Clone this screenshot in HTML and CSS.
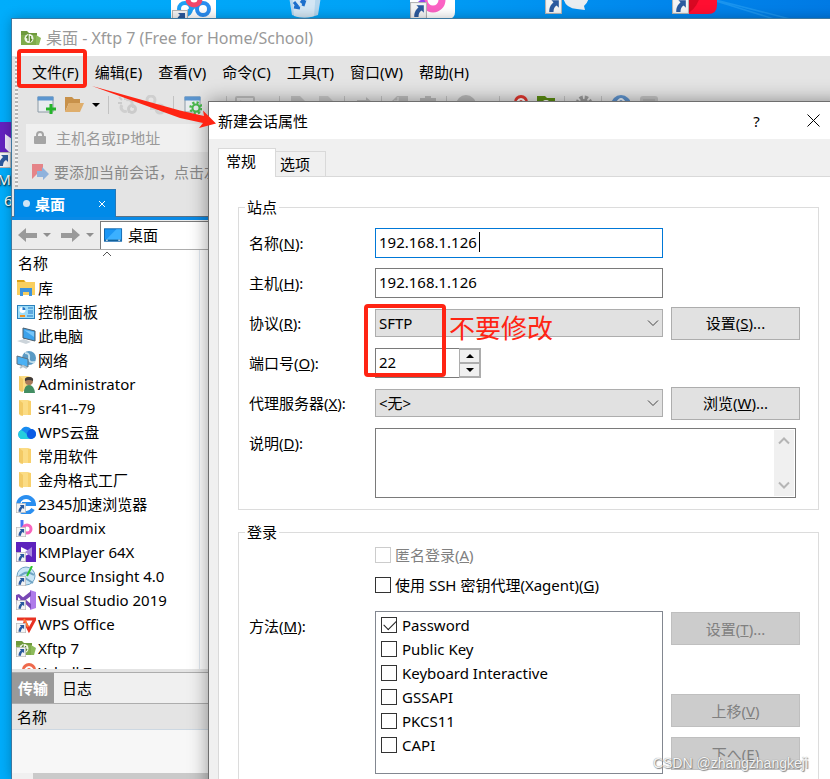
FILE: index.html
```html
<!DOCTYPE html>
<html lang="zh-CN">
<head>
    <meta charset="UTF-8">
    <meta name="viewport" content="width=device-width, initial-scale=1.0">
    <title>Xftp 7</title>
    <link rel="stylesheet" href="styles.css">
</head>
<body>
    <!-- shared icons -->
    <svg class="defs" width="0" height="0" aria-hidden="true">
        <symbol id="shortcut" viewBox="0 0 16 16">
            <rect x=".5" y=".5" width="15" height="15" fill="#f4f4f4" stroke="#b4b4b4"/>
            <path d="M6 3h7v7l-2-2c-2 1-3 3-3 6H4c0-4 1-6 4-9z" fill="#2b5a9e"/>
        </symbol>
        <symbol id="folder" viewBox="0 0 20 20">
            <path d="M3 2h9l3 1v14H7l-2 1-2-2z" fill="#fbdc85"/>
            <path d="M3 2l4 3v13l-4-2z" fill="#f3ca65"/>
            <path d="M12 3h3v14h-3z" fill="#f8d06b"/>
        </symbol>
        <symbol id="chev" viewBox="0 0 12 8">
            <path d="M1 1.500l5 5 5-5" fill="none" stroke="currentColor"/>
        </symbol>
        <symbol id="drop" viewBox="0 0 8 6">
            <path d="M0 1h8L4 5z" fill="currentColor"/>
        </symbol>
        <symbol id="xftp" viewBox="0 0 20 16">
            <path d="M0 1h6l2 2h8v12H0z" fill="#6f9a3e"/>
            <path d="M0 5h16v10H0z" fill="#7fab4b"/>
            <path d="M15 5l5 3-2 7h-3z" fill="#8dbb5b"/>
            <circle cx="8" cy="8.500" r="4.500" fill="#f2f6ea"/>
            <path d="M7 11V6L5.500 8M9.500 6v5L11 9" fill="none" stroke="#5c8a2f" stroke-width="1.300"/>
        </symbol>
        <symbol id="monitor" viewBox="0 0 20 16">
            <rect x=".5" y="1.500" width="18" height="13" fill="#1b96f5" stroke="#0d62a8"/>
            <path d="M1 14L13 2h5v12z" fill="#3bb0ff"/>
            <path d="M1 13.500h17" stroke="#05406f"/>
            <path d="M2 13.500h2M15 13.500h2" stroke="#fff"/>
        </symbol>
    </svg>

    <div class="desktop">
        <svg class="wallpaper" viewBox="0 0 830 24" aria-hidden="true">
            <path d="M716 1l58 18M700-4l90 23" stroke="#2aa0f2" stroke-width="1.500" opacity=".6"/>
            <rect x="171" y="-20" width="45" height="39" fill="#fff"/>
            <circle cx="185" cy="9" r="6" fill="none" stroke="#1ea0f5" stroke-width="4"/>
            <circle cx="203" cy="9" r="6" fill="none" stroke="#2a8df0" stroke-width="4"/>
            <path d="M188 12l11-10" stroke="#1ea0f5" stroke-width="4"/>
            <circle cx="194" cy="-1" r="6" fill="#fff" stroke="#f2456a" stroke-width="5"/>
            <use href="#shortcut" x="172" y="10" width="16" height="16"/>
            <path d="M288-10h34l-4 25q-13 5-26 0z" fill="#b4d6ee"/>
            <path d="M292-10l2 26q10 3 20 0l2-26z" fill="#d3e6f4"/>
            <path d="M294 2l4 5M304-1l-3 4M300 8l-6-1M303 6l2-6" stroke="#1d6fcc" stroke-width="3"/>
            <path d="M410-20h45v32q0 6-6 7h-39z" fill="#fff"/>
            <circle cx="433" cy="0" r="9" fill="none" stroke="#fb62c4" stroke-width="7"/>
            <path d="M421 0q3 6 5 7" stroke="#8f45ee" stroke-width="6"/>
            <use href="#shortcut" x="410" y="2" width="17" height="17"/>
            <use href="#shortcut" x="545" y="-3" width="17" height="17"/>
            <path d="M563-6q0 14 14 15l8 1-1-4q5-4 5-12z" fill="#e9edf0"/>
            <path d="M680-20h37v25q0 9-9 9h-28z" fill="#ff0f31"/>
            <path d="M680-20h22q0 27-16 34h-6z" fill="#d80822"/>
            <use href="#shortcut" x="672" y="-3" width="17" height="17"/>
        </svg>
        <div class="desktop-icon">
            <svg width="12" height="46" viewBox="0 0 12 46" aria-hidden="true">
                <path d="M0 0h12v46H0z" fill="#6322bf"/>
                <path d="M5 12l7 5v16L5 26z" fill="#efe7fa"/>
                <use href="#shortcut" x="-5" y="30" width="16" height="16"/>
            </svg>
            <span>KMPlayer</span>
            <span class="indent">64X</span>
        </div>

        <main class="window">
            <header class="window-title">
                <svg width="20" height="16"><use href="#xftp"/></svg>
                <h1>桌面 - Xftp 7 (Free for Home/School)</h1>
            </header>

            <div class="rebar">
                <nav class="menu">
                    <button>文件(F)</button>
                    <button>编辑(E)</button>
                    <button>查看(V)</button>
                    <button>命令(C)</button>
                    <button>工具(T)</button>
                    <button>窗口(W)</button>
                    <button>帮助(H)</button>
                </nav>
                <div class="toolbar">
                    <button aria-label="新建"><svg viewBox="0 0 20 20"><path d="M2 2h15v15H2z" fill="#e9edf0" stroke="#8c9aa5"/><path d="M1.500 1.500h16v4h-16z" fill="#5b95cf"/><path d="M15 9v10M10 14h10" stroke="#26b32b" stroke-width="3"/></svg></button>
                    <button aria-label="打开"><svg viewBox="0 0 20 20"><path d="M1 2h7l2 2h6v4H5L1 17z" fill="#c8914a"/><path d="M5 8h15l-4 9H1z" fill="#dfae6c"/></svg></button>
                    <svg class="drop"><use href="#drop"/></svg>
                    <span class="sep"></span>
                    <button aria-label="断开" disabled><svg viewBox="0 0 20 20"><path d="M2 2l3 3M8 1v4M1 8h4M12 18v-3M18 12h-3" stroke="#cbcbcb" stroke-width="2"/><path d="M9 5a4 4 0 0 1 6 4M5 10a4 4 0 0 0 5 6" fill="none" stroke="#cfcfcf" stroke-width="3"/><circle cx="15" cy="14" r="3.500" fill="none" stroke="#cbcbcb" stroke-width="3"/></svg></button>
                    <button aria-label="重新连接" disabled><svg viewBox="0 0 20 20"><circle cx="6" cy="5" r="4" fill="none" stroke="#cfcfcf" stroke-width="3"/><circle cx="15" cy="14" r="4" fill="none" stroke="#cfcfcf" stroke-width="3"/><path d="M6 9v5h6" fill="none" stroke="#cfcfcf" stroke-width="2"/></svg></button>
                    <span class="sep"></span>
                    <button aria-label="属性"><svg viewBox="0 0 20 20"><path d="M3 2h15v15H3z" fill="#e9edf0" stroke="#8c9aa5"/><path d="M2.500 1.500h16v4h-16z" fill="#5b95cf"/><circle cx="14" cy="13" r="5.500" fill="none" stroke="#49b84c" stroke-width="2.500" stroke-dasharray="2.200 2.100"/><circle cx="14" cy="13" r="3.500" fill="#e9edf0" stroke="#49b84c" stroke-width="2"/></svg></button>
                    <svg class="drop"><use href="#drop"/></svg>
                    <span class="sep"></span>
                    <button aria-label="终端" disabled><svg viewBox="0 0 20 20"><rect x="1" y="2" width="18" height="14" rx="1" fill="none" stroke="#bdbdbd" stroke-width="2"/><path d="M5 6l3 3" stroke="#bdbdbd" stroke-width="2"/></svg></button>
                    <svg class="drop"><use href="#drop"/></svg>
                    <span class="sep"></span>
                    <button aria-label="新建文件" disabled><svg viewBox="0 0 20 20"><path d="M3 1h9l5 5v12H3z" fill="#c3c3c3"/></svg></button>
                    <button aria-label="编辑文件" disabled><svg viewBox="0 0 20 20"><path d="M3 1h9l5 5v12H3z" fill="#c9c9c9"/></svg></button>
                    <span class="sep"></span>
                    <button aria-label="传输" disabled><svg viewBox="0 0 20 20"><path d="M4 5h9V2l7 6-7 6v-4H4z" fill="#bcbcbc"/></svg></button>
                    <span class="sep"></span>
                    <button aria-label="复制" disabled><svg viewBox="0 0 20 20"><path d="M7 1h11v12H2V6z" fill="#bdbdbd"/><path d="M4 6h4V2" fill="none" stroke="#e3e3e3"/></svg></button>
                    <button aria-label="粘贴" disabled><svg viewBox="0 0 20 20"><path d="M2 3h5V1h6v2h5v14H2z" fill="#b8b8b8"/></svg></button>
                    <span class="sep"></span>
                    <button aria-label="同步" disabled><svg viewBox="0 0 20 20"><circle cx="11" cy="10" r="10" fill="#b8b8b8"/></svg></button>
                    <svg class="drop"><use href="#drop"/></svg>
                    <span class="sep"></span>
                    <button aria-label="Xshell"><svg viewBox="0 0 20 20"><circle cx="13" cy="7" r="7" fill="#df362e"/><path d="M0 7h7" stroke="#df362e" stroke-width="2"/><path d="M9 7q4-6 8 0" fill="none" stroke="#fff" stroke-width="2"/></svg></button>
                    <button aria-label="Xftp"><svg viewBox="0 0 20 20"><path d="M1 1h8l2 2h8v14H1z" fill="#5a8c12"/><circle cx="10" cy="10" r="5" fill="#fff"/></svg></button>
                    <span class="sep"></span>
                    <button aria-label="选项"><svg viewBox="0 0 20 20"><circle cx="11" cy="9" r="6" fill="none" stroke="#9b9b9b" stroke-width="5" stroke-dasharray="3 1.700"/><circle cx="11" cy="9" r="5" fill="#9b9b9b"/></svg></button>
                    <span class="sep"></span>
                    <button aria-label="帮助"><svg viewBox="0 0 20 20"><circle cx="11" cy="10" r="10" fill="#5f93cd"/><path d="M7 8q4-8 8 0" fill="none" stroke="#eef4fb" stroke-width="2"/></svg></button>
                    <button aria-label="反馈"><svg viewBox="0 0 20 20"><rect x="2" y="1" width="18" height="14" rx="3" fill="#c4c4c4"/><path d="M5 5h12" stroke="#aaa"/></svg></button>
                </div>
                <label class="address">
                    <svg width="14" height="14" viewBox="0 0 14 14"><path d="M4 6V4a3 3 0 0 1 6 0v2" fill="none" stroke="#a5a5a5" stroke-width="2"/><rect x="1" y="5" width="12" height="8" rx="1" fill="#a5a5a5"/></svg>
                    <input type="text" placeholder="主机名或IP地址" aria-label="主机名或IP地址">
                </label>
                <div class="hint">
                    <svg width="17" height="17" viewBox="0 0 17 17"><path d="M0 1h11v9L5 11l-5 5z" fill="#e58488"/><path d="M10 4l7 7-6 6v-3H5V8h5z" fill="#8fb2dc"/></svg>
                    <span>要添加当前会话，点击左</span>
                </div>
            </div>

            <div class="tabstrip">
                <div class="session-tab">
                    <span class="dot"></span>
                    <strong>桌面</strong>
                    <button aria-label="关闭"><svg width="8" height="8" viewBox="0 0 8 8"><path d="M1 1l6 6M7 1L1 7" stroke="#fff"/></svg></button>
                </div>
            </div>

            <div class="nav">
                <button aria-label="后退"><svg width="20" height="16" viewBox="0 0 20 16"><path d="M0 8l8-7v5h11v5H8v4z" fill="#9a9a9a"/></svg></button>
                <svg class="drop"><use href="#drop"/></svg>
                <button aria-label="前进"><svg width="20" height="16" viewBox="0 0 20 16"><path d="M19 8l-8-7v5H0v5h11v4z" fill="#9a9a9a"/></svg></button>
                <svg class="drop"><use href="#drop"/></svg>
                <div class="path">
                    <svg width="19" height="16"><use href="#monitor"/></svg>
                    <span>桌面</span>
                </div>
            </div>

            <div class="files">
                <div class="files-head">
                    <span>名称</span>
                    <svg class="sort" width="10" height="6" viewBox="0 0 10 6"><path d="M1 5l4-4 4 4" fill="none" stroke="#555"/></svg>
                </div>
                <ul>
                    <li><svg viewBox="0 0 20 20"><path d="M1 2h7l2 2h9v13H1z" fill="#f9cf5f"/><path d="M1 2h7l1 2H1z" fill="#dda215"/><path d="M4 18v-8h12v8h-3v-4H7v4z" fill="#3d93dd"/></svg>库</li>
                    <li><svg viewBox="0 0 20 20"><rect x="1.500" y="3.500" width="17" height="13" fill="#9bdcf8" stroke="#2b82bd"/><circle cx="6.500" cy="8" r="3" fill="#fff"/><path d="M6.500 8V5a3 3 0 0 1 3 3z" fill="#2476c6"/><path d="M12 6h5M12 9h5M12 11h5" stroke="#2476c6"/><path d="M4 14h5" stroke="#f09121" stroke-width="2"/><path d="M11 14h6" stroke="#2476c6"/></svg>控制面板</li>
                    <li><svg viewBox="0 0 20 20"><path d="M7 2l12 3v10L7 12z" fill="#3ba2ec" stroke="#4b5d6b"/><path d="M8 4l10 7V6z" fill="#77c6fa"/><path d="M1 15l7-2 7 3-5 2z" fill="#ccd4da"/></svg>此电脑</li>
                    <li><svg viewBox="0 0 20 20"><circle cx="13" cy="8" r="7" fill="#5b9bc5"/><path d="M9 3q5 0 4 5t6 4" fill="none" stroke="#c5e1ee" stroke-width="2"/><path d="M1 6l11 3v8L1 14z" fill="#4bb1f4" stroke="#5e7281"/><path d="M4 18l3-2 4 2" fill="none" stroke="#b8c4cb" stroke-width="2"/></svg>网络</li>
                    <li><svg viewBox="0 0 20 20"><use href="#folder"/><path d="M8 19q0-8 5-8t6 8z" fill="#438e63"/><circle cx="13" cy="7" r="4" fill="#a7795a"/><path d="M9 7q-1-4 4-4t4 4q-4-2-8 0z" fill="#3f3b38"/></svg>Administrator</li>
                    <li><svg viewBox="0 0 20 20"><use href="#folder"/></svg>sr41--79</li>
                    <li><svg viewBox="0 0 20 20"><path d="M5 17a5 5 0 0 1 0-9 6 6 0 0 1 10-1 5 5 0 0 1 0 10z" fill="#188bf0"/><path d="M5 17a5 5 0 0 1 0-9q5 2 9 9z" fill="#24cfdd"/><path d="M15 7a5 5 0 0 1 0 10q-5-1-4-6 1-3 4-4z" fill="#0c5ce5"/></svg>WPS云盘</li>
                    <li><svg viewBox="0 0 20 20"><use href="#folder"/></svg>常用软件</li>
                    <li><svg viewBox="0 0 20 20"><use href="#folder"/></svg>金舟格式工厂</li>
                    <li><svg viewBox="0 0 20 20"><path d="M17 15a8 8 0 1 1 1-5H6" fill="none" stroke="#2b8ff0" stroke-width="4"/><use href="#shortcut" x="0" y="9" width="10" height="10"/></svg>2345加速浏览器</li>
                    <li><svg viewBox="0 0 20 20"><path d="M6 2v10" stroke="#4974f5" stroke-width="3"/><circle cx="11" cy="11" r="4" fill="none" stroke="#f766bd" stroke-width="3"/><use href="#shortcut" x="0" y="9" width="10" height="10"/></svg>boardmix</li>
                    <li><svg viewBox="0 0 20 20"><path d="M0 0h20v20H0z" fill="#5d22bd"/><path d="M5 5l8 4v3l-8 4z" fill="#fff"/><path d="M16 5v10l-7-5z" fill="#a98ae0"/><use href="#shortcut" x="0" y="10" width="10" height="10"/></svg>KMPlayer 64X</li>
                    <li><svg viewBox="0 0 20 20"><circle cx="10" cy="10" r="9" fill="#c8e5f6" stroke="#6fa4c4"/><path d="M2 12q8-9 16-3M9 12l8 5" fill="none" stroke="#6fa4c4" stroke-width="2"/><path d="M16 0l-5 10" stroke="#2fc42d" stroke-width="2"/><use href="#shortcut" x="0" y="10" width="10" height="10"/></svg>Source Insight 4.0</li>
                    <li><svg viewBox="0 0 20 20"><path d="M14 0l6 2v16l-6 2z" fill="#ae7bea"/><path d="M0 5l3-1 12 10v5L2 7v7H0zM15 1v5L3 15l-3-2z" fill="#7848b5"/><use href="#shortcut" x="0" y="10" width="10" height="10"/></svg>Visual Studio 2019</li>
                    <li><svg viewBox="0 0 20 20"><path d="M1 5h18l-6 11-4-8-2 6" fill="none" stroke="#e83223" stroke-width="3"/><path d="M8 5l4 8" stroke="#ff7a35" stroke-width="2"/><use href="#shortcut" x="0" y="9" width="10" height="10"/></svg>WPS Office</li>
                    <li><svg viewBox="0 0 20 20"><use href="#xftp" x="0" y="2" width="20" height="16"/><use href="#shortcut" x="0" y="9" width="10" height="10"/></svg>Xftp 7</li>
                    <li><svg viewBox="0 0 20 20"><circle cx="13" cy="8" r="7" fill="#ee6a4d"/><path d="M9 8q4-6 8 0" fill="none" stroke="#fff" stroke-width="2"/></svg>Xshell 7</li>
                </ul>
            </div>

            <section class="transfer">
                <div class="transfer-tabs">
                    <button class="active">传输</button>
                    <button>日志</button>
                </div>
                <div class="transfer-head">名称</div>
                <div class="transfer-body"></div>
                <div class="hscroll"></div>
            </section>
        </main>

        <div class="dialog" role="dialog" aria-label="新建会话属性">
            <header class="dialog-title">
                <h2>新建会话属性</h2>
                <button aria-label="帮助">?</button>
                <button aria-label="关闭"><svg width="13" height="13" viewBox="0 0 13 13"><path d="M.5 .5l12 12M12.500 .5l-12 12" stroke="#000"/></svg></button>
            </header>
            <div class="dialog-tabs">
                <button class="active">常规</button>
                <button>选项</button>
            </div>
            <form class="pane">
                <fieldset>
                    <legend>站点</legend>
                    <div class="fields">
                        <label for="name">名称(<u>N</u>):</label>
                        <div class="focus">
                            <input type="text" id="name" value="192.168.1.126">
                            <span class="caret"></span>
                        </div>

                        <label for="host" class="first">主机(<u>H</u>):</label>
                        <input type="text" id="host" value="192.168.1.126">

                        <label for="protocol" class="first">协议(<u>R</u>):</label>
                        <div class="select">
                            <select id="protocol"><option>SFTP</option></select>
                            <svg><use href="#chev"/></svg>
                        </div>
                        <button type="button">设置(<u>S</u>)...</button>

                        <label for="port" class="first">端口号(<u>O</u>):</label>
                        <div class="spin">
                            <input type="number" id="port" value="22">
                            <div class="spin-buttons">
                                <button type="button" aria-label="加"><svg class="up"><use href="#drop"/></svg></button>
                                <button type="button" aria-label="减"><svg><use href="#drop"/></svg></button>
                            </div>
                        </div>

                        <label for="proxy" class="first">代理服务器(<u>X</u>):</label>
                        <div class="select">
                            <select id="proxy"><option>&lt;无&gt;</option></select>
                            <svg><use href="#chev"/></svg>
                        </div>
                        <button type="button">浏览(<u>W</u>)...</button>

                        <label for="desc" class="first top">说明(<u>D</u>):</label>
                        <div class="memo">
                            <textarea id="desc"></textarea>
                            <div class="vscroll">
                                <svg class="up"><use href="#chev"/></svg>
                                <svg><use href="#chev"/></svg>
                            </div>
                        </div>
                    </div>
                </fieldset>

                <fieldset>
                    <legend>登录</legend>
                    <div class="login">
                        <div class="options">
                            <label class="disabled"><input type="checkbox" disabled><span>匿名登录(<u>A</u>)</span></label>
                            <label><input type="checkbox"><span>使用 SSH 密钥代理(Xagent)(<u>G</u>)</span></label>
                        </div>
                        <span class="method" id="method">方法(<u>M</u>):</span>
                        <div class="methods" role="group" aria-labelledby="method">
                            <label><input type="checkbox" checked><span>Password</span></label>
                            <label><input type="checkbox"><span>Public Key</span></label>
                            <label><input type="checkbox"><span>Keyboard Interactive</span></label>
                            <label><input type="checkbox"><span>GSSAPI</span></label>
                            <label><input type="checkbox"><span>PKCS11</span></label>
                            <label><input type="checkbox"><span>CAPI</span></label>
                        </div>
                        <div class="side">
                            <button type="button" disabled>设置(<u>T</u>)...</button>
                            <button type="button" class="move" disabled>上移(<u>V</u>)</button>
                            <button type="button" disabled>下へ(<u>E</u>)</button>
                        </div>
                    </div>
                </fieldset>
            </form>
        </div>

        <!-- annotations over both windows -->
        <div class="mark mark-menu"></div>
        <div class="mark mark-port"></div>
        <svg class="arrow" width="126" height="46" viewBox="0 0 126 46" aria-hidden="true"><path d="M1 0l88 24.500 24 5.500-1-5.500L125 37.500 108 42l4-5-23-5z" fill="#ff2413"/></svg>
        <p class="note">不要修改</p>
        <p class="watermark">CSDN @zhangzhangkeji</p>
    </div>
</body>
</html>
```
FILE: styles.css
```css
* {
    margin: 0;
    padding: 0;
    box-sizing: border-box;
    font-family: "Noto Sans", "Noto Sans CJK SC", sans-serif;
}
body {
    font-size: 15px;
    line-height: 20px;
    color: #000;
    overflow: hidden;
}
button {
    background: none;
    border: none;
    font-size: 15px;
    line-height: 20px;
    color: #000;
}
input, select, textarea {
    font-size: 15px;
    color: #000;
    outline: none;
    border-radius: 0;
}
svg {
    display: block;
    flex: none;
}
.defs {
    position: absolute;
}
.desktop {
    position: relative;
    height: 100vh;
    overflow: hidden;
    background: linear-gradient(90deg, #00adfb 0%, #00a2f6 45%, #0086ec 80%, #007ae4 100%);
}
.wallpaper {
    position: absolute;
    top: 0;
    left: 0;
    width: 830px;
    height: 24px;
}
.desktop-icon {
    position: absolute;
    left: 0;
    top: 122px;
    display: flex;
    flex-direction: column;
    gap: 1px;
    color: #fff;
    text-shadow: 1px 1px 2px #000;
}
.desktop-icon span {
    margin-left: -12px;
}
.desktop-icon .indent {
    margin-left: 4px;
}

/* main window */
.window {
    position: absolute;
    left: 12px;
    top: 19px;
    right: -40px;
    bottom: 0;
    display: flex;
    flex-direction: column;
    background: #fff;
    box-shadow: 0 0 0 1px #3d78a0, 0 0 12px rgba(0, 0, 0, 0.3);
}
.window-title {
    display: flex;
    align-items: center;
    gap: 5px;
    height: 37px;
    padding-left: 9px;
}
.window-title h1 {
    font-size: 16px;
    font-weight: normal;
    color: #999;
}
.rebar {
    position: relative;
    display: flex;
    flex-direction: column;
    padding: 0 0 1px 14px;
    background: #e4e4e4;
}
.rebar::before {
    content: "";
    position: absolute;
    left: 3px;
    top: 1px;
    bottom: 2px;
    width: 3px;
    background: repeating-linear-gradient(#b4b4b4 0 2px, #f4f4f4 2px 4px);
}
.menu {
    display: flex;
    align-items: center;
    gap: 16px;
    height: 32px;
    padding-left: 6px;
    white-space: nowrap;
}
.toolbar {
    display: flex;
    align-items: center;
    gap: 8px;
    height: 33px;
    padding-left: 10px;
}
.toolbar button {
    width: 20px;
    height: 20px;
    flex: none;
}
.toolbar button svg {
    width: 20px;
    height: 20px;
}
.drop {
    width: 8px;
    height: 6px;
}
.sep {
    width: 1px;
    height: 18px;
    flex: none;
    background: #c2c2c2;
}
.address {
    display: flex;
    align-items: center;
    gap: 9px;
    height: 28px;
    margin: 3px 0;
    padding-left: 7px;
    background: #f0f0f0;
}
.address input {
    flex: 1;
    border: none;
    background: none;
}
.address input::placeholder {
    color: #999;
    opacity: 1;
}
.hint {
    display: flex;
    align-items: center;
    gap: 5px;
    height: 33px;
    padding-left: 6px;
    color: #888;
}
.tabstrip {
    height: 31px;
    padding-left: 2px;
    background: linear-gradient(#e4e4e4 27px, #5c7285 27px 28px, #0a8ae6 28px);
}
.session-tab {
    display: flex;
    align-items: center;
    gap: 5px;
    width: 102px;
    height: 28px;
    padding: 0 9px 0 8px;
    background: #008ae8;
    border: 1px solid #2678b8;
    border-bottom: none;
    color: #fff;
}
.session-tab .dot {
    width: 7px;
    height: 7px;
    border-radius: 50%;
    background: #cfe4f5;
}
.session-tab button {
    margin-left: auto;
}
.nav {
    display: flex;
    align-items: center;
    gap: 5px;
    height: 30px;
    padding-left: 6px;
    background: #ececec;
    border-bottom: 1px solid #adadad;
}
.nav > .drop {
    color: #8f8f8f;
    margin-right: 5px;
}
.nav > .path {
    margin-left: -4px;
}
.path {
    flex: 1;
    display: flex;
    align-items: center;
    gap: 5px;
    height: 28px;
    padding-left: 3px;
    background: #fff;
    border: 1px solid #7a7a7a;
    border-bottom: none;
}
.files {
    flex: 1;
    min-height: 0;
    width: 188px;
    overflow: hidden;
    border-right: 1px solid #e2eaf2;
}
.files-head {
    position: relative;
    height: 26px;
    padding: 3px 6px;
}
.sort {
    position: absolute;
    left: 90px;
    top: 1px;
}
.files ul {
    list-style: none;
}
.files li {
    display: flex;
    align-items: center;
    gap: 2px;
    height: 24px;
    padding-left: 4px;
    white-space: nowrap;
}
.files li svg {
    width: 20px;
    height: 20px;
}
.transfer {
    border-top: 3px solid #e4e4e4;
    background: #f7f7f7;
}
.transfer-tabs {
    display: flex;
    height: 32px;
    background: #f0f0f0;
    border-top: 1px solid #adadad;
    border-bottom: 1px solid #adadad;
}
.transfer-tabs button {
    padding: 0 8px;
}
.transfer-tabs .active {
    width: 42px;
    padding: 0;
    background: #999;
    color: #fff;
    font-weight: bold;
}
.transfer-head {
    height: 26px;
    padding: 3px 5px;
    background: #e4e4e4;
    border-bottom: 1px solid #cdd8e2;
}
.transfer-body {
    height: 43px;
}
.hscroll {
    height: 6px;
    background: linear-gradient(90deg, #f0f0f0 21px, #cacaca 21px);
}

/* session properties dialog */
.dialog {
    position: absolute;
    left: 208px;
    top: 101px;
    right: -20px;
    bottom: -40px;
    display: flex;
    flex-direction: column;
    background: #f0f0f0;
    border: 1px solid #6e6e6e;
    box-shadow: 0 0 18px rgba(0, 0, 0, 0.4);
}
.dialog-title {
    display: flex;
    align-items: center;
    height: 37px;
    padding: 0 12px 0 9px;
    background: #fff;
}
.dialog-title h2 {
    flex: 1;
    font-size: 15px;
    font-weight: normal;
}
.dialog-title button {
    display: flex;
    align-items: center;
    justify-content: center;
    width: 47px;
    height: 36px;
}
.dialog-title button + button {
    margin-left: 10px;
}
.dialog-tabs {
    display: flex;
    align-items: flex-end;
    height: 37px;
    padding-left: 9px;
}
.dialog-tabs button {
    width: 50px;
    height: 25px;
    padding-right: 11px;
    border: 1px solid #d9d9d9;
    border-left: none;
    border-bottom: none;
    text-align: center;
}
.dialog-tabs button.active {
    position: relative;
    width: 58px;
    height: 29px;
    margin-bottom: -1px;
    padding: 0 12px 4px 0;
    border-left: 1px solid #d9d9d9;
    background: #fff;
}
.pane {
    flex: 1;
    display: flex;
    flex-direction: column;
    gap: 12px;
    margin: 0 10px 0 9px;
    padding: 20px 19px 0;
    background: #fff;
    border: 1px solid #d9d9d9;
}
fieldset {
    border: 1px solid #dcdcdc;
    padding: 6px 18px 6px 10px;
    min-width: 0;
}
fieldset + fieldset {
    flex: 1;
    padding-top: 0;
}
legend {
    margin-left: -4px;
    padding: 0 2px;
}
.fields {
    display: grid;
    grid-template-columns: 118px 1fr 129px;
    column-gap: 8px;
    grid-auto-rows: minmax(40px, auto);
    align-items: center;
}
.fields .first {
    grid-column: 1;
}
.fields input,
.fields select {
    display: block;
    width: 100%;
    height: 30px;
    padding: 0 3px 3px;
    border: 1px solid #7a7a7a;
    background: #fff;
}
.focus {
    position: relative;
}
.fields .focus input {
    border-color: #0078d7;
}
.caret {
    position: absolute;
    left: 104px;
    top: 4px;
    width: 1px;
    height: 20px;
    background: #000;
}
.select {
    position: relative;
}
.fields .select select {
    height: 28px;
    padding-bottom: 0;
    appearance: none;
    background: #e1e1e1;
    border-color: #adadad;
}
.select svg {
    position: absolute;
    right: 4px;
    top: 10px;
    width: 12px;
    height: 8px;
    color: #444;
    pointer-events: none;
}
.fields > button,
.side button {
    width: 129px;
    height: 33px;
    background: #e1e1e1;
    border: 1px solid #adadad;
}
.spin {
    display: flex;
    width: 106px;
    border: 1px solid #acacac;
}
.fields .spin input {
    width: 84px;
    margin: -1px 0 -1px -1px;
    appearance: textfield;
    border-right: none;
}
.spin input::-webkit-inner-spin-button {
    display: none;
}
.spin-buttons {
    flex: 1;
    display: flex;
    flex-direction: column;
    background: #e6e6ea;
}
.spin-buttons button {
    display: flex;
    flex: 1;
    align-items: center;
    justify-content: center;
    background: #f0f0f0;
    border: 1px solid #adadad;
}
.spin-buttons svg {
    width: 8px;
    height: 6px;
}
.up {
    transform: rotate(180deg);
}
.fields .top {
    align-self: start;
    padding-top: 10px;
}
.memo {
    grid-column: 2 / 4;
    display: flex;
    height: 70px;
    margin: 5px 4px 5px 0;
    border: 1px solid #7a7a7a;
    padding: 1px;
}
.memo textarea {
    flex: 1;
    border: none;
    resize: none;
    overflow: hidden;
}
.vscroll {
    display: flex;
    flex-direction: column;
    justify-content: space-between;
    align-items: center;
    width: 20px;
    padding: 7px 0;
    background: #f0f0f0;
    color: #b5b5b5;
}
.vscroll svg {
    width: 12px;
    height: 8px;
    stroke-width: 2px;
}
.login {
    display: grid;
    grid-template-columns: 118px 1fr 129px;
    column-gap: 8px;
    row-gap: 13px;
}
.options {
    grid-column: 2 / 4;
    display: flex;
    flex-direction: column;
    gap: 4px;
}
.options label,
.methods label {
    display: flex;
    align-items: center;
    gap: 4px;
    height: 26px;
}
.disabled {
    color: #808080;
}
input[type="checkbox"] {
    appearance: none;
    width: 16px;
    height: 16px;
    border: 1px solid #333;
    background: #fff;
}
input[type="checkbox"]:disabled {
    border-color: #ccc;
}
input[type="checkbox"]:checked::before {
    content: "";
    display: block;
    width: 11px;
    height: 6px;
    margin: 2px 0 0 2px;
    border-left: 1px solid #222;
    border-bottom: 1px solid #222;
    transform: rotate(-45deg);
}
.method {
    padding-top: 5px;
}
.methods {
    height: 163px;
    padding: 1px 5px;
    border: 1px solid #828790;
}
.methods label {
    height: 24px;
    gap: 5px;
}
.side {
    display: flex;
    flex-direction: column;
    gap: 10px;
    padding-top: 1px;
}
.side button:disabled {
    background: #ccc;
    border-color: #bfbfbf;
    color: #808080;
}
.side .move {
    margin-top: 39px;
}

/* annotations */
.mark {
    position: absolute;
    border: 4px solid #ff2413;
    border-radius: 4px;
}
.mark-menu {
    left: 17px;
    top: 49px;
    width: 70px;
    height: 39px;
}
.mark-port {
    left: 364px;
    top: 304px;
    width: 82px;
    height: 73px;
}
.arrow {
    position: absolute;
    left: 91px;
    top: 86px;
}
.note {
    position: absolute;
    left: 449px;
    top: 310px;
    font-size: 26px;
    line-height: 36px;
    color: #ff2413;
}
.watermark {
    position: absolute;
    right: 22px;
    bottom: 6px;
    font-size: 14px;
    font-family: "Liberation Sans", sans-serif;
    color: #f4f4f4;
    text-shadow: 0 0 1px #777, 1px 1px 1px #888;
}
```
